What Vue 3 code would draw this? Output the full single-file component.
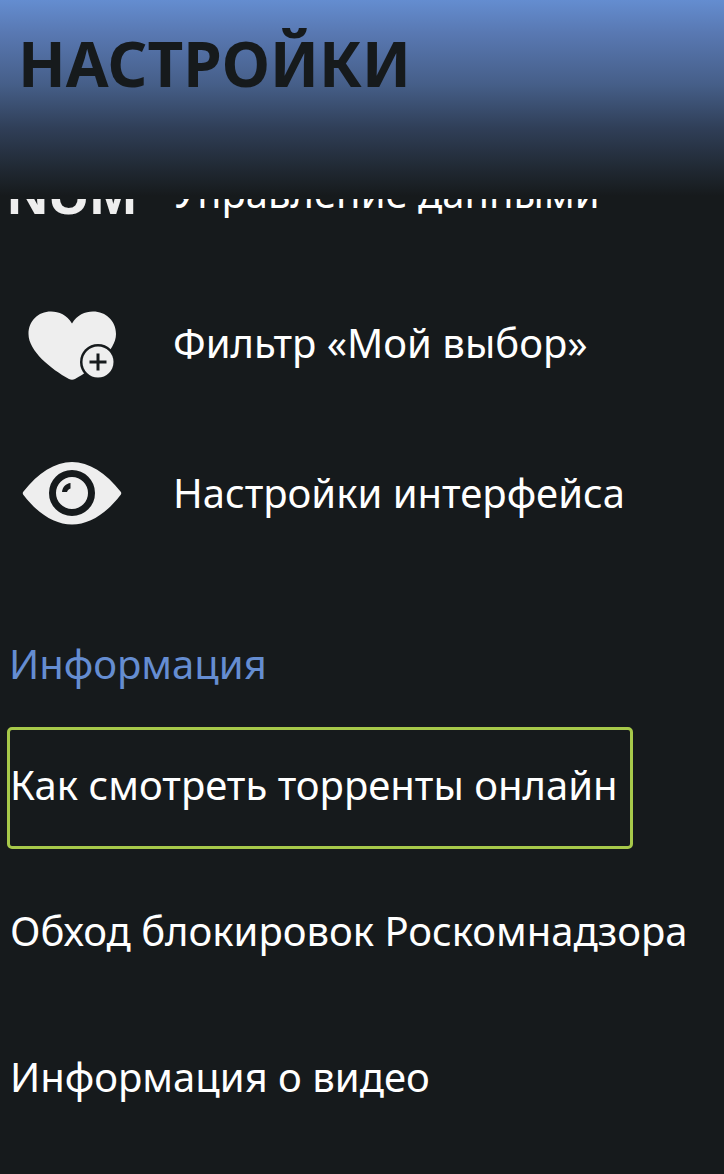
<script setup>
const tools = [
  { id: 'data', label: 'Управление данными' },
  { id: 'favorites', label: 'Фильтр «Мой выбор»' },
  { id: 'interface', label: 'Настройки интерфейса' },
]

const articles = [
  { id: 'torrents', label: 'Как смотреть торренты онлайн', active: true },
  { id: 'bypass', label: 'Обход блокировок Роскомнадзора' },
  { id: 'video', label: 'Информация о видео' },
]
</script>

<template>
  <div class="screen">
    <header class="header">
      <h1 class="title">НАСТРОЙКИ</h1>
    </header>
    <main class="content">
      <nav class="tools">
        <button v-for="tool in tools" :key="tool.id" type="button" class="tool">
          <span class="icon">
            <span v-if="tool.id === 'data'" class="num">NUM</span>
            <svg v-else-if="tool.id === 'favorites'" width="104" height="80" viewBox="0 0 104 80" aria-hidden="true">
              <path
                class="light"
                d="M52 19.500 C47 11 39 7.500 31 7.500 C18 7.500 8.500 17 8.500 30 C8.500 47 31 65 49 75 Q52 76.500 55 75 C73 65 96 47 96 30 C96 17 86 7.500 73 7.500 C65 7.500 57 11 52 19.500Z"
              />
              <circle class="dark" cx="78" cy="58" r="18" />
              <circle class="light" cx="78" cy="58" r="15.500" />
              <path class="plus" d="M69.500 58H86.500M78 49.500V66.500" />
            </svg>
            <svg v-else width="104" height="80" viewBox="0 0 104 80" aria-hidden="true">
              <path
                class="light"
                d="M3.500 37.500 C18 19 35 8 52 8 C69 8 86 19 100.500 37.500 Q102 39 100.500 41 C86 60 69 70.500 52 70.500 C35 70.500 18 60 3.500 41 Q2 39 3.500 37.500Z"
              />
              <circle class="ring" cx="52" cy="39" r="19.500" />
              <path class="glint" d="M42 38 C42.500 33 46 29.500 50.500 29 V34.500 C49 35 47.500 36 47 38Z" />
            </svg>
          </span>
          <span class="label">{{ tool.label }}</span>
        </button>
      </nav>
      <section class="info">
        <h2 class="heading">Информация</h2>
        <a
          v-for="article in articles"
          :key="article.id"
          href="#"
          class="article"
          :class="{ active: article.active }"
        >{{ article.label }}</a>
      </section>
    </main>
  </div>
</template>

<style>
body {
  background: #161a1c;
}
</style>

<style scoped>
.screen {
  min-height: 100vh;
  display: flex;
  flex-direction: column;
  background: #161a1c;
  color: #fff;
  font-family: "Noto Sans", "Open Sans", sans-serif;
  font-size: 40px;
  line-height: 56px;
}

.header {
  height: 199px;
  box-sizing: border-box;
  padding: 23px 18px;
  background: linear-gradient(#648dd0 0, #5979b3 32px, #465f89 84px, #303f58 128px, #1f2730 172px, #161a1c 196px);
}

.title {
  margin: 0;
  color: #161a1c;
  font-size: 62px;
  line-height: 80px;
  font-weight: 700;
}

.content {
  overflow: hidden;
}

.tools {
  display: flex;
  flex-direction: column;
  margin-top: -80px;
}

.tool {
  display: flex;
  align-items: center;
  gap: 29px;
  height: 150px;
  padding: 0;
  border: 0;
  background: none;
  color: inherit;
  font: inherit;
  text-align: left;
  white-space: nowrap;
}

.label {
  padding-bottom: 2px;
}

.icon {
  display: flex;
  justify-content: center;
  width: 144px;
}

.num {
  color: #eee;
  font-family: "Liberation Sans", Arial, sans-serif;
  font-size: 57px;
  line-height: 64px;
  font-weight: 700;
}

.light {
  fill: #eee;
}

.dark,
.glint {
  fill: #161a1c;
}

.plus {
  fill: none;
  stroke: #161a1c;
  stroke-width: 3;
}

.ring {
  fill: none;
  stroke: #161a1c;
  stroke-width: 7;
}

.info {
  display: flex;
  flex-direction: column;
  align-items: flex-start;
  gap: 24px;
  padding: 63px 7px 24px;
}

.heading {
  margin: 0 2px 7px;
  color: #658dd1;
  font-size: 40px;
  line-height: 64px;
  font-weight: 400;
}

.article {
  display: flex;
  align-items: center;
  height: 122px;
  box-sizing: border-box;
  padding: 0 12px 7px 0;
  border: 3px solid transparent;
  border-radius: 5px;
  color: inherit;
  text-decoration: none;
  white-space: nowrap;
}

.article.active {
  border-color: #a7c94a;
}
</style>
